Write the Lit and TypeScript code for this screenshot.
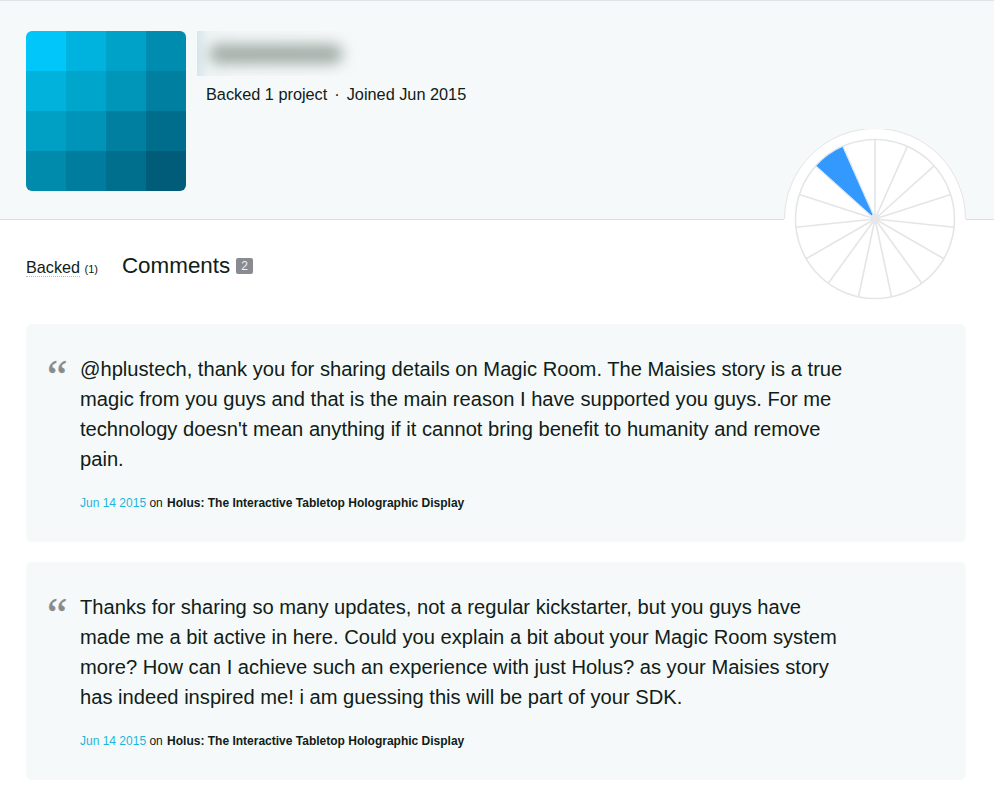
import { html, css, LitElement, svg } from 'lit';
import { customElement } from 'lit/decorators.js';

const AVATAR = [
  '#00c6fa', '#00b3de', '#00a2c8', '#008cae',
  '#00b2dc', '#00a5cc', '#0096ba', '#007fa0',
  '#00a0c4', '#0095b8', '#007fa0', '#006d8c',
  '#008aab', '#007d9e', '#006e8d', '#005c78',
];

const COMMENTS = [
  {
    text: "@hplustech, thank you for sharing details on Magic Room. The Maisies story is a true magic from you guys and that is the main reason I have supported you guys. For me technology doesn't mean anything if it cannot bring benefit to humanity and remove pain.",
  },
  {
    text: 'Thanks for sharing so many updates, not a regular kickstarter, but you guys have made me a bit active in here. Could you explain a bit about your Magic Room system more? How can I achieve such an experience with just Holus? as your Maisies story has indeed inspired me! i am guessing this will be part of your SDK.',
  },
];

@customElement('app-root')
export class AppRoot extends LitElement {
  static styles = css`
    :host {
      display: block;
      position: relative;
      min-height: 805px;
      background: #fff;
      font-family: 'Liberation Sans', Arial, sans-serif;
      color: #0f2016;
    }

    .header {
      box-sizing: border-box;
      height: 220px;
      padding: 30px 26px 0;
      display: flex;
      gap: 11px;
      background: #f6f9fa;
      border-top: 1px solid #dfe3e6;
      border-bottom: 1px solid #dcdfe2;
    }

    .avatar {
      width: 160px;
      height: 160px;
      display: grid;
      grid-template-columns: repeat(4, 1fr);
      grid-auto-rows: 40px;
      border-radius: 6px;
      overflow: hidden;
      flex: none;
    }

    .info {
      display: flex;
      flex-direction: column;
    }

    .name-box {
      width: 173px;
      height: 45px;
      display: flex;
      align-items: center;
      padding-left: 12px;
      box-sizing: border-box;
      background: linear-gradient(90deg, #d8e6ea 0, #eef4f5 12px, #f4f7f8 40px, #f6f9fa 100%);
      overflow: hidden;
    }

    .name-blur {
      width: 134px;
      height: 20px;
      border-radius: 10px;
      background: #a3aea8;
      filter: blur(7px);
    }

    .stats {
      margin: 8px 0 0 9px;
      font-size: 16.3px;
      line-height: 20px;
      white-space: nowrap;
    }

    .dot {
      margin: 0 7px;
    }

    .wheel {
      position: absolute;
      left: 784px;
      top: 129px;
      display: block;
    }

    .tabs {
      display: flex;
      align-items: baseline;
      gap: 24px;
      padding: 33px 26px 0;
      height: 72px;
      box-sizing: border-box;
    }

    .tab-backed {
      font-size: 16.2px;
      line-height: 24px;
    }

    .tab-backed span {
      border-bottom: 1px dotted #b5bcb8;
    }

    .tab-backed small {
      font-size: 11px;
    }

    .tab-comments {
      font-size: 22.4px;
      line-height: 26px;
      display: flex;
      align-items: center;
      gap: 6px;
    }

    .badge {
      width: 17px;
      height: 16px;
      border-radius: 2px;
      background: #8a8b90;
      color: #f0f0f0;
      font-size: 12px;
      line-height: 16px;
      text-align: center;
    }

    .comments {
      display: flex;
      flex-direction: column;
      gap: 20px;
      padding: 32px 28px 0 26px;
    }

    .card {
      box-sizing: border-box;
      height: 218px;
      padding: 30px 0 0 21px;
      display: flex;
      gap: 13px;
      background: #f6f9fa;
      border-radius: 6px;
    }

    .quote {
      width: 20px;
      flex: none;
      font-family: 'Liberation Serif', 'Times New Roman', serif;
      font-size: 46px;
      line-height: 46px;
      color: #888b8b;
      -webkit-text-stroke: 0.4px #888b8b;
    }

    .text {
      margin: 0;
      width: 768px;
      font-size: 20.15px;
      line-height: 30px;
    }

    .meta {
      margin: 20px 0 0;
      font-size: 12px;
      line-height: 18px;
    }

    .meta .date {
      color: #1cb5dc;
    }

    .meta b {
      font-weight: bold;
      margin-left: 1px;
    }
  `;

  private renderWheel() {
    const cx = 91;
    const cy = 90;
    const r = 79.5;
    const pt = (deg: number, rad: number) => {
      const a = (deg * Math.PI) / 180;
      return { x: cx + rad * Math.sin(a), y: cy - rad * Math.cos(a) };
    };
    const spokes = Array.from({ length: 15 }, (_, i) => i * 24);
    const a = pt(312, r);
    const b = pt(336, r);
    return html`
      <svg class="wheel" width="182" height="172" viewBox="0 0 182 172">
        <path d="M0.5 90 A90.5 90.5 0 0 1 181.5 90" fill="#fff" stroke="#e2e4e5" stroke-width="1" />
        <rect x="0" y="90" width="182" height="3" fill="#fff" />
        <circle cx=${cx} cy=${cy} r=${r} fill="#fff" stroke="#e4e5e6" stroke-width="1.6" />
        ${spokes.map((deg) => {
          const p = pt(deg, r);
          return svg`<line x1=${cx} y1=${cy} x2=${p.x} y2=${p.y} stroke="#e4e5e6" stroke-width="1.6" />`;
        })}
        <path
          d="M${cx} ${cy} L${a.x} ${a.y} A${r} ${r} 0 0 1 ${b.x} ${b.y} Z"
          fill="#3399ff"
          stroke="#d6e8f8"
          stroke-width="1"
        />
        <circle cx=${cx} cy=${cy} r="5" fill="#e6e7e8" />
      </svg>
    `;
  }

  render() {
    return html`
      <div class="header">
        <div class="avatar">
          ${AVATAR.map((c) => html`<div style="background:${c}"></div>`)}
        </div>
        <div class="info">
          <div class="name-box"><div class="name-blur"></div></div>
          <div class="stats">Backed 1 project<span class="dot">·</span>Joined Jun 2015</div>
        </div>
      </div>
      ${this.renderWheel()}
      <div class="tabs">
        <div class="tab-backed"><span>Backed</span> <small>(1)</small></div>
        <div class="tab-comments">Comments <div class="badge">2</div></div>
      </div>
      <div class="comments">
        ${COMMENTS.map(
          (c) => html`
            <div class="card">
              <div class="quote">“</div>
              <div>
                <p class="text">${c.text}</p>
                <p class="meta">
                  <span class="date">Jun 14 2015</span> on
                  <b>Holus: The Interactive Tabletop Holographic Display</b>
                </p>
              </div>
            </div>
          `
        )}
      </div>
    `;
  }
}
